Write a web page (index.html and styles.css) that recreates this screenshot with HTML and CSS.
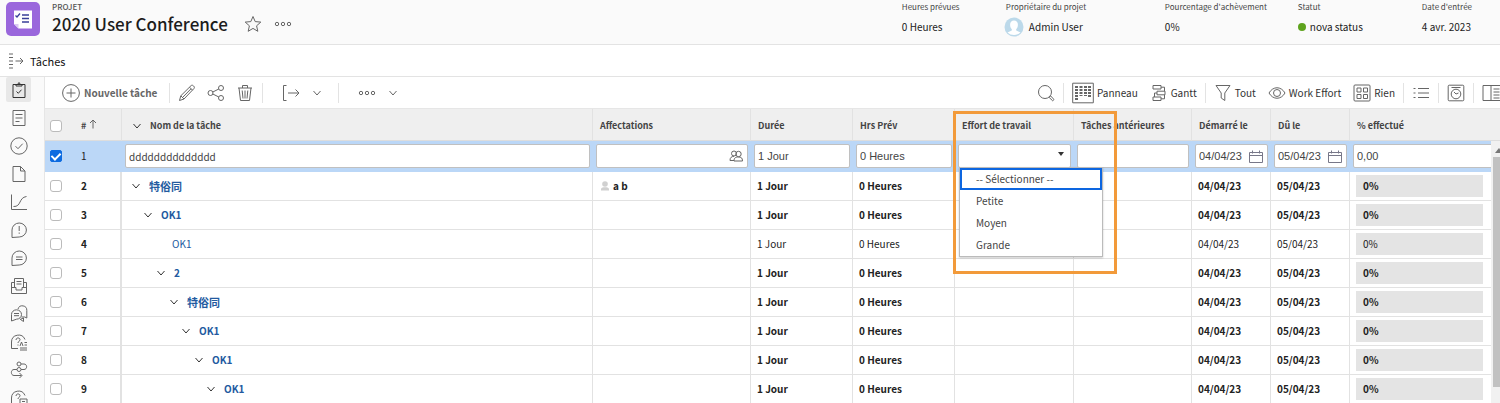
FILE: index.html
```html
<!DOCTYPE html>
<html lang="fr">
<head>
<meta charset="utf-8">
<meta name="viewport" content="width=device-width, initial-scale=1">
<title>2020 User Conference</title>
<link rel="stylesheet" href="styles.css">
</head>
<body>
<svg class="defs" aria-hidden="true">
  <symbol id="chevron" viewBox="0 0 10 10"><path d="M1.500 3 5 7 8.500 3"/></symbol>
  <symbol id="calendar" viewBox="0 0 14 13"><path d="M.5 2.500h13v10H.5zM.5 5.500h13M3.500.5v3M10.500.5v3"/></symbol>
  <symbol id="bubble" viewBox="0 0 18 18"><path d="M2 16.500V9a7.200 7 0 1 1 7.200 7z"/></symbol>
</svg>

<header class="project">
  <svg class="logo" viewBox="0 0 36 36"><rect x="1" y="1" width="34" height="34" rx="5" fill="#9a67dc"/><path d="M9 9.500h18v18H13.500L9 23z" fill="#fff"/><path d="M9 23h4.500v4.500z" fill="#d9c8f2"/><path d="M10.500 14.500l1.500 1.500 3-3.500M17 14h7M17 17.500h7M17 21h7" fill="none" stroke="#3a3f99" stroke-width="1.300"/></svg>
  <div class="project-name">
    <span class="kind">PROJET</span>
    <h1>2020 User Conference</h1>
  </div>
  <button class="plain" aria-label="Favori"><svg class="i18" viewBox="0 0 18 18"><path d="M9 1.500l2.200 5.100 5.600.5-4.200 3.700 1.200 5.500L9 13.400l-4.800 2.900 1.200-5.500L1.200 7.100l5.600-.5z"/></svg></button>
  <button class="plain dots" aria-label="Plus"><svg class="i18" viewBox="0 0 18 18"><circle cx="3" cy="9" r="1.700"/><circle cx="9" cy="9" r="1.700"/><circle cx="15" cy="9" r="1.700"/></svg></button>
  <dl class="facts">
    <div><dt>Heures prévues</dt><dd>0 Heures</dd></div>
    <div><dt>Propriétaire du projet</dt><dd class="owner"><svg class="avatar" viewBox="0 0 20 20"><circle cx="10" cy="10" r="9.500" fill="#bcd9ea"/><path d="M10 3.500c2.500 0 3.900 1.800 3.900 4.200 0 2-.8 3.600-1.700 4.400v1.400l4.300 1.900a9.500 9.500 0 0 1-13 0l4.300-1.900v-1.400c-.9-.8-1.700-2.400-1.700-4.400 0-2.400 1.400-4.200 3.900-4.200z" fill="#fff"/></svg>Admin User</dd></div>
    <div><dt>Pourcentage d'achèvement</dt><dd>0%</dd></div>
    <div><dt>Statut</dt><dd class="status"><i></i>nova status</dd></div>
    <div><dt>Date d'entrée</dt><dd>4 avr. 2023</dd></div>
  </dl>
</header>

<div class="section-title">
  <svg class="i18" viewBox="0 0 18 18"><path d="M1 2h4M1 5.500h4M1 9h4M1 12.500h4M1 16h4M7.500 9h7.500M12 6l3 3-3 3"/></svg>
  <h2>Tâches</h2>
</div>

<div class="workspace">
  <nav class="rail">
    <a href="#" class="active" aria-label="Tâches"><svg class="i18" viewBox="0 0 18 18"><path d="M3 3.500h12v13H3zM6 5V3.500h1.500L9 1.500l1.500 2H12V5zM6.500 10.500l1.800 1.800 3.200-3.600"/></svg></a>
    <a href="#" aria-label="Détails"><svg class="i18" viewBox="0 0 18 18"><path d="M3 1.500h12v15H3zM5.500 5.500h7M5.500 9h7M5.500 12.500h4"/></svg></a>
    <a href="#" aria-label="Approbations"><svg class="i18" viewBox="0 0 18 18"><circle cx="9" cy="9" r="8.200"/><path d="M5.500 9.200l2.500 2.500 4.700-5"/></svg></a>
    <a href="#" aria-label="Documents"><svg class="i18" viewBox="0 0 18 18"><path d="M3 1.500h7.500L15 6v10.500H3zM10.500 1.500V6H15"/></svg></a>
    <a href="#" aria-label="Graphique"><svg class="i18" viewBox="0 0 18 18"><path d="M1.500 1.500v15H17M3.500 13.500c8 .5 5-9 13-10"/></svg></a>
    <a href="#" aria-label="Problèmes"><svg class="i18" viewBox="0 0 18 18"><use href="#bubble"/><path d="M9.200 5v5M9.200 11.500v1.300"/></svg></a>
    <a href="#" aria-label="Mises à jour"><svg class="i18" viewBox="0 0 18 18"><use href="#bubble"/><path d="M6 8h6.500M6 10.500h6.500"/></svg></a>
    <a href="#" aria-label="Dossier"><svg class="i18" viewBox="0 0 18 18"><path d="M4.500 10V1.500h9V10M4.500 5.500h-3v11h15v-11h-3M1.500 10.500h4.500v2.500h6v-2.500h4.500M6.500 4.500h5M6.500 7h5"/></svg></a>
    <a href="#" aria-label="Discussions"><svg class="i18" viewBox="0 0 18 18"><path d="M1.500 16V9.500a5 4.700 0 1 1 5 4.700zM4 8.500h5M4 10.700h5M8 4a4.500 4.500 0 0 1 8.800 1.500V13l-2-1h-3.300M10 14.500l3.500-1.500v3.500l-3-2"/></svg></a>
    <a href="#" aria-label="Questions"><svg class="i18" viewBox="0 0 18 18"><path d="M8 15.500H1.500V9A7 7 0 0 1 15 6.500M6 7c0-3 4.500-2.500 4 0-.3 1.300-2 1.300-2 3M8 11.500v1M10 13l1.500-4L13 13M14.500 9.500H17M14.500 12H17M10 15H17M10 17h7"/></svg></a>
    <a href="#" aria-label="Flux"><svg class="i18" viewBox="0 0 18 18"><circle cx="9" cy="3" r="2"/><circle cx="9" cy="8.500" r="2"/><path d="M11 3h3c3.500 0 3.500 5.500 0 5.500h-3M7 8.500H4c-3.500 0-3.500 6 0 6h7.500M9.500 12l2.500 2.500L9.500 17"/></svg></a>
    <a href="#" aria-label="Aide"><svg class="i18" viewBox="0 0 18 18"><path d="M8 15.500H1.500V9A7 7 0 0 1 15 6.500M6 7c0-3 4.500-2.500 4 0-.3 1.300-2 1.300-2 3M10 10h7v6h-7zM12 12.500h3"/></svg></a>
  </nav>

  <main>
    <div class="toolbar">
      <button class="new"><svg class="i18" viewBox="0 0 18 18"><circle cx="9" cy="9" r="8.400"/><path d="M9 4.500v9M4.500 9h9"/></svg>Nouvelle tâche</button>
      <span class="sep"></span>
      <div class="edit-tools">
        <button aria-label="Modifier"><svg class="i18" viewBox="0 0 18 18"><path d="M1.500 16.500l1.300-4.700L13 1.700c.8-.8 1.700-.6 2.600.3s1 1.900.3 2.600L6 15zM11.500 3.200l3 3M2.800 11.800L6 15M5 13L13 4.800"/></svg></button>
        <button aria-label="Partager"><svg class="i18" viewBox="0 0 18 18"><circle cx="3.500" cy="9" r="2.500"/><circle cx="14" cy="4" r="2.500"/><circle cx="14" cy="14" r="2.500"/><path d="M5.800 8l6-3M5.800 10l6 3"/></svg></button>
        <button aria-label="Supprimer"><svg class="i18" viewBox="0 0 18 18"><path d="M2 4h14M6.500 4V1.500h5V4M3 4l1.500 12.500h9L15 4M6.200 6.500l.8 8M9 6.500v8M11.800 6.500l-.8 8"/></svg></button>
      </div>
      <span class="sep"></span>
      <div class="menu-tools">
        <button aria-label="Exporter"><svg class="i18" viewBox="0 0 18 18"><path d="M4.500 1.500h-3v15h3M6 9h11M13.500 5.500L17 9l-3.500 3.500"/></svg></button>
        <button aria-label="Options d'exportation"><svg class="i10"><use href="#chevron"/></svg></button>
      </div>
      <span class="sep"></span>
      <div class="menu-tools">
        <button aria-label="Plus"><svg class="i18" viewBox="0 0 18 18"><circle cx="3" cy="9" r="1.700"/><circle cx="9" cy="9" r="1.700"/><circle cx="15" cy="9" r="1.700"/></svg></button>
        <button aria-label="Plus d'options"><svg class="i10"><use href="#chevron"/></svg></button>
      </div>
      <div class="view-tools">
        <button aria-label="Rechercher"><svg class="i18" viewBox="0 0 18 18"><circle cx="8" cy="8" r="6.500"/><path d="M12.500 12.500l1.200-.5 3.300 3.500-1.300 1.300-3.400-3.200z"/></svg></button>
        <span class="sep"></span>
        <button><svg class="i22" viewBox="0 0 22 22"><path d="M.7 1.200h20.600v19.600H.7z"/><path class="dash" d="M4.500 4v14M9 4v10M13.500 4v10M17.500 4v12"/></svg>Panneau</button>
        <button><svg class="i18" viewBox="0 0 18 18"><path d="M3 1.500h8V5H3zM7 7.200h8v3.600H7zM3 13h8v3.500H3zM11 3.200h3.500v4M7 9H4.500v4M11 14.800h3.500v-4"/></svg>Gantt</button>
        <span class="sep"></span>
        <button><svg class="i18" viewBox="0 0 18 18"><path d="M2 1.500h14L10.800 9v7.500L7.200 14V9z"/></svg>Tout</button>
        <button><svg class="i18" viewBox="0 0 18 18"><path d="M1 9c4-7 12-7 16 0-4 7-12 7-16 0z"/><circle cx="9" cy="9" r="3.500"/></svg>Work Effort</button>
        <button><svg class="i18" viewBox="0 0 18 18"><rect x="1" y="1" width="16" height="16" rx="1"/><path d="M4 4h4v4H4zM10.500 4h4v4h-4zM4 10.500h4v4H4zM10.500 10.500h4v4h-4z"/></svg>Rien</button>
        <span class="sep"></span>
        <button aria-label="Résumé"><svg class="i18" viewBox="0 0 18 18"><path d="M6 4.500h11M6 9h11M6 13.500h11M1.500 4.500h2M1.500 9h2M1.500 13.500h2"/></svg></button>
        <span class="sep"></span>
        <button aria-label="Chronologie"><svg class="i18" viewBox="0 0 18 18"><rect x="1.200" y="1.200" width="15.600" height="15.600" rx="1"/><circle cx="9" cy="10" r="4.800"/><path d="M4.500 3.500h9M9 10l-2-2M9 10l2.500-1"/></svg></button>
        <span class="sep"></span>
        <button aria-label="Volet"><svg class="i18" viewBox="0 0 18 18"><path d="M19 1.500H1v15h18M9 1.500v15M11.500 5h6M11.500 8h6M11.500 11h6M11.500 14h6"/></svg></button>
      </div>
    </div>

    <div class="grid">
      <table>
        <colgroup><col class="c-num"><col><col class="c-assign"><col class="c-dur"><col class="c-dur"><col class="c-effort"><col class="c-before"><col class="c-date"><col class="c-date"><col class="c-pct"></colgroup>
        <thead>
          <tr>
            <th><div class="num"><input type="checkbox" aria-label="Tout sélectionner"><span># <svg class="i10" viewBox="0 0 10 10"><path d="M5 9.500V1M2 4l3-3 3 3"/></svg></span></div></th>
            <th><div class="name level-0"><svg class="i10"><use href="#chevron"/></svg>Nom de la tâche</div></th>
            <th>Affectations</th><th>Durée</th><th>Hrs Prév</th>
            <th class="anchor">Effort de travail<span class="highlight"></span></th>
            <th>Tâches antérieures</th><th>Démarré le</th><th>Dû le</th><th>% effectué</th>
          </tr>
        </thead>
        <tbody>
          <tr class="editing">
            <td><div class="num"><input type="checkbox" checked aria-label="Ligne 1"><span>1</span></div></td>
            <td><div class="field"><input class="clean" type="text" value="dddddddddddddd" aria-label="Nom de la tâche"></div></td>
            <td><div class="field"><input type="text" aria-label="Affectations"><svg class="people" viewBox="0 0 14 12"><circle cx="5" cy="3.500" r="2.500"/><circle cx="9.500" cy="4" r="2.700"/><path d="M1 10.500c0-3 1.500-4 4-4.200M1 10.500h4M5 11c0-3.500 2-4 4.500-4s4 .8 4 4z"/></svg></div></td>
            <td><div class="field"><input type="text" value="1 Jour" aria-label="Durée"></div></td>
            <td><div class="field"><input type="text" value="0 Heures" aria-label="Hrs Prév"></div></td>
            <td><div class="field">
              <select aria-label="Effort de travail"><option></option><option>Petite</option><option>Moyen</option><option>Grande</option></select>
              <svg class="caret" viewBox="0 0 6 4"><path d="M0 0h6L3 4z"/></svg>
              <div class="options" role="listbox" aria-label="Effort de travail">
                <button role="option" class="focused" aria-selected="true">-- Sélectionner --</button>
                <button role="option">Petite</button>
                <button role="option">Moyen</button>
                <button role="option">Grande</button>
              </div>
            </div></td>
            <td><div class="field"><input type="text" aria-label="Tâches antérieures"></div></td>
            <td><div class="field"><input type="text" value="04/04/23" aria-label="Démarré le"><svg class="cal"><use href="#calendar"/></svg></div></td>
            <td><div class="field"><input type="text" value="05/04/23" aria-label="Dû le"><svg class="cal"><use href="#calendar"/></svg></div></td>
            <td><div class="field last"><input type="text" value="0,00" aria-label="% effectué"></div></td>
          </tr>
          <tr><td><div class="num"><input type="checkbox" aria-label="Ligne 2"><span>2</span></div></td><td><div class="name level-0"><svg class="i10"><use href="#chevron"/></svg><a href="#" class="cjk">特俗同</a></div></td><td><div class="assignee"><svg class="person" viewBox="0 0 8 10"><circle cx="4" cy="3" r="2.800"/><path d="M0 9.500V8c0-1 1-1.500 2.500-1.800h3C7 6.500 8 7 8 8v1.500z"/></svg>a b</div></td><td>1 Jour</td><td>0 Heures</td><td></td><td></td><td>04/04/23</td><td>05/04/23</td><td><div class="pct">0%</div></td></tr>
          <tr><td><div class="num"><input type="checkbox" aria-label="Ligne 3"><span>3</span></div></td><td><div class="name level-1"><svg class="i10"><use href="#chevron"/></svg><a href="#">OK1</a></div></td><td></td><td>1 Jour</td><td>0 Heures</td><td></td><td></td><td>04/04/23</td><td>05/04/23</td><td><div class="pct">0%</div></td></tr>
          <tr class="leaf"><td><div class="num"><input type="checkbox" aria-label="Ligne 4"><span>4</span></div></td><td><div class="name"><a href="#">OK1</a></div></td><td></td><td>1 Jour</td><td>0 Heures</td><td></td><td></td><td>04/04/23</td><td>05/04/23</td><td><div class="pct">0%</div></td></tr>
          <tr><td><div class="num"><input type="checkbox" aria-label="Ligne 5"><span>5</span></div></td><td><div class="name level-2"><svg class="i10"><use href="#chevron"/></svg><a href="#">2</a></div></td><td></td><td>1 Jour</td><td>0 Heures</td><td></td><td></td><td>04/04/23</td><td>05/04/23</td><td><div class="pct">0%</div></td></tr>
          <tr><td><div class="num"><input type="checkbox" aria-label="Ligne 6"><span>6</span></div></td><td><div class="name level-3"><svg class="i10"><use href="#chevron"/></svg><a href="#" class="cjk">特俗同</a></div></td><td></td><td>1 Jour</td><td>0 Heures</td><td></td><td></td><td>04/04/23</td><td>05/04/23</td><td><div class="pct">0%</div></td></tr>
          <tr><td><div class="num"><input type="checkbox" aria-label="Ligne 7"><span>7</span></div></td><td><div class="name level-4"><svg class="i10"><use href="#chevron"/></svg><a href="#">OK1</a></div></td><td></td><td>1 Jour</td><td>0 Heures</td><td></td><td></td><td>04/04/23</td><td>05/04/23</td><td><div class="pct">0%</div></td></tr>
          <tr><td><div class="num"><input type="checkbox" aria-label="Ligne 8"><span>8</span></div></td><td><div class="name level-5"><svg class="i10"><use href="#chevron"/></svg><a href="#">OK1</a></div></td><td></td><td>1 Jour</td><td>0 Heures</td><td></td><td></td><td>04/04/23</td><td>05/04/23</td><td><div class="pct">0%</div></td></tr>
          <tr><td><div class="num"><input type="checkbox" aria-label="Ligne 9"><span>9</span></div></td><td><div class="name level-6"><svg class="i10"><use href="#chevron"/></svg><a href="#">OK1</a></div></td><td></td><td>1 Jour</td><td>0 Heures</td><td></td><td></td><td>04/04/23</td><td>05/04/23</td><td><div class="pct">0%</div></td></tr>
        </tbody>
      </table>
      <div class="scrollbar"><svg viewBox="0 0 8 5"><path d="M0 5l4-5 4 5z"/></svg><span></span></div>
    </div>
  </main>
</div>
</body>
</html>
```
FILE: styles.css
```css
* { box-sizing: border-box; }

body {
  margin: 0;
  height: 100vh;
  display: flex;
  flex-direction: column;
  overflow: hidden;
  background: #fff;
  color: #222;
  font: 10px/16px "Noto Sans CJK SC", "Noto Sans", sans-serif;
}

h1, h2, dl, dd { margin: 0; font-weight: 400; }
button, input, select { font: inherit; color: inherit; }
button { padding: 0; border: 0; background: none; display: flex; align-items: center; cursor: pointer; }
a { color: #235a9f; text-decoration: none; }

svg { flex: none; fill: none; stroke: #666; stroke-width: 1; }
.defs { display: none; }
.i10 { width: 10px; height: 10px; }
.i18 { width: 18px; height: 18px; }
.i22 { width: 22px; height: 22px; }
.dash { stroke-width: 3; stroke-dasharray: 2 1; }

/* Project header */
.project {
  flex: none;
  display: flex;
  align-items: center;
  height: 45px;
  padding: 0 28px 0 5px;
  background: #fafafa;
  border-bottom: 1px solid #e3e3e3;
}
.logo { width: 36px; height: 36px; margin-bottom: 6px; stroke: none; }
.project-name { display: flex; flex-direction: column; margin: 0 16px 6px 11px; }
.kind { font-size: 8px; line-height: 10px; font-weight: 500; color: #555; }
h1 { font-size: 17px; line-height: 24px; font-weight: 500; color: #1c1c1c; }
.plain { margin-top: 3px; }
.dots { margin-left: 12px; }
.facts {
  margin: 0 0 8px auto;
  display: grid;
  grid-template-columns: 104px 159px 133px 124px auto;
}
.facts dt { font-size: 8px; line-height: 14px; color: #444; white-space: nowrap; }
.facts dd { display: flex; align-items: center; height: 20px; margin-top: 3px; white-space: nowrap; }
.avatar { width: 20px; height: 20px; margin: 0 5px 0 -2px; stroke: none; }
.status i { width: 8px; height: 8px; margin-right: 4px; border-radius: 50%; background: #5ea31d; }

.section-title {
  flex: none;
  display: flex;
  align-items: center;
  gap: 4px;
  height: 32px;
  padding-left: 8px;
  border-bottom: 1px solid #e3e3e3;
}
h2 { font-size: 11px; line-height: 18px; color: #111; }

/* Workspace */
.workspace { flex: 1; min-height: 0; display: flex; }
.rail {
  flex: none;
  width: 45px;
  overflow: hidden;
  display: flex;
  flex-direction: column;
  gap: 3px;
  padding-left: 6px;
  background: #fafafa;
  border-right: 1px solid #e6e6e6;
}
.rail a { flex: none; display: flex; justify-content: center; align-items: center; width: 25px; height: 25px; border-radius: 2px; }
.rail .active { background: #e8e8e8; }
.rail .active svg { stroke: #333; }
main { flex: 1; min-width: 0; display: flex; flex-direction: column; }

.toolbar {
  flex: none;
  display: flex;
  align-items: center;
  height: 32px;
  padding-left: 17px;
  overflow: hidden;
  border-bottom: 1px solid #e6e6e6;
  color: #333;
  white-space: nowrap;
}
.sep { flex: none; width: 1px; height: 20px; background: #e3e3e3; }
.new { gap: 4px; margin-right: 12px; font-weight: 700; color: #666; }
.edit-tools { display: flex; gap: 11px; margin: 0 8px; }
.menu-tools { display: flex; align-items: center; gap: 12px; margin: 0 16px 0 19px; }
.view-tools { display: flex; align-items: center; gap: 8px; margin-left: auto; }
.view-tools button { gap: 3px; }
.view-tools button + button { margin-left: 4px; }

/* Task grid */
.grid { position: relative; flex: 1; min-height: 0; overflow: hidden; }
table { width: 100%; table-layout: fixed; border-collapse: separate; border-spacing: 0; }
.c-num { width: 77px; }
.c-assign { width: 158px; }
.c-dur { width: 102px; }
.c-effort { width: 119px; }
.c-before { width: 118px; }
.c-date { width: 79px; }
.c-pct { width: 150px; }
th, td { padding: 0 6px; text-align: left; white-space: nowrap; border-right: 1px solid #e2e2e2; }
th { height: 32px; padding: 2px 7px 0; font-weight: 700; font-size: 9px; color: #444; background: #efefef; border-bottom: 1px solid #ddd; }
td { height: 29px; font-weight: 700; border-bottom: 1px solid #e2e2e2; }
th:last-child, td:last-child { border-right: 0; }
th:first-child, td:first-child { padding-left: 5px; padding-right: 0; }
td:first-child { border-right-width: 2px; }
.leaf td { font-weight: 400; }
.leaf .num { font-weight: 700; }
.leaf .name { padding-left: 44px; }

.num { display: flex; align-items: center; gap: 19px; }
.num input { appearance: none; width: 12px; height: 12px; margin: 0; border: 1px solid #bbb; border-radius: 3px; background: #fff; }
.num input:checked { border-color: #0d6be0; border-radius: 2px; background: #0d6be0; display: grid; place-items: center; }
.num input:checked::before { content: ""; width: 4px; height: 7px; margin-bottom: 2px; border: solid #fff; border-width: 0 2px 2px 0; transform: rotate(45deg); }
.name { display: flex; align-items: center; gap: 8px; }
.name svg { stroke: #333; }
.cjk { font-size: 11px; }
.level-0 { padding-left: 3px; }
.level-1 { padding-left: 15px; }
.level-2 { padding-left: 28px; }
.level-3 { padding-left: 41px; }
.level-4 { padding-left: 53px; }
.level-5 { padding-left: 66px; }
.level-6 { padding-left: 78px; }
.assignee { display: flex; align-items: center; gap: 4px; padding-left: 2px; }
.person { width: 8px; height: 10px; fill: #d0d0d0; stroke: none; }
.pct { width: 127px; height: 22px; padding-left: 7px; line-height: 22px; background: #e4e4e4; }

.editing td { height: 31px; padding: 0 2px 0 3px; background: #bbd7f7; border-color: #bbd7f7; font-weight: 400; }
.editing td:first-child { padding-left: 5px; }
.editing td:last-child { padding-right: 0; }
.field { position: relative; display: flex; align-items: center; height: 24px; border: 1px solid #c0c0c0; border-radius: 2px; background: #fff; color: #444; }
.field input, .field select {
  flex: 1;
  min-width: 0;
  width: 100%;
  height: 22px;
  padding: 0 3px;
  border: 0;
  outline: 0;
  background: none;
  appearance: none;
  font-family: "Liberation Sans", Arial, sans-serif;
  font-size: 11px;
}
.field input.clean { font-family: inherit; font-size: 10px; }
.people { width: 14px; height: 12px; margin-right: 4px; }
.cal { width: 14px; height: 13px; margin-right: 4px; stroke: #778; }
.caret { width: 6px; height: 4px; margin: 0 6px 4px 0; fill: #333; stroke: none; }

.options {
  position: absolute;
  z-index: 2;
  top: 22px;
  left: 0;
  width: 144px;
  background: #fff;
  border: 1px solid #bbb;
  box-shadow: 0 1px 2px #0003;
}
.options button { width: 100%; height: 22px; padding-left: 16px; border: 0; }
.options .focused { padding-left: 14px; border: 2px solid #0d66e0; }

.anchor { position: relative; }
.highlight {
  position: absolute;
  z-index: 3;
  top: 2px;
  left: -2px;
  width: 164px;
  height: 163px;
  border: 3px solid #f29a3a;
  pointer-events: none;
}

.scrollbar { position: absolute; top: 32px; right: 0; bottom: 0; width: 9px; background: #f1f1f1; padding-left: 2px; display: flex; flex-direction: column; }
.scrollbar svg { width: 8px; height: 5px; margin: 7px 0 4px 2px; fill: #777; stroke: none; }
.scrollbar span { height: 230px; background: #c1c1c1; }
```
